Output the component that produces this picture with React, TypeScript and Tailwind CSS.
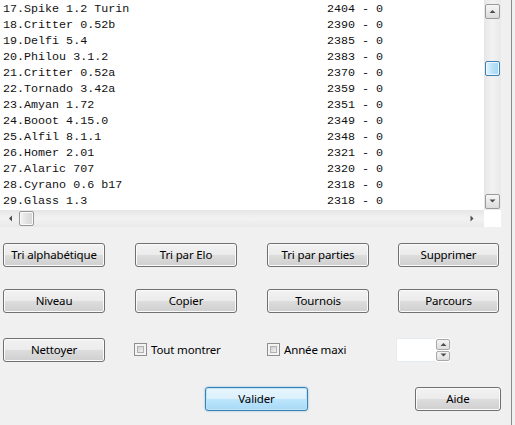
import React from "react";

const rows: [string, string][] = [
  ["17.Spike 1.2 Turin", "2404"],
  ["18.Critter 0.52b", "2390"],
  ["19.Delfi 5.4", "2385"],
  ["20.Philou 3.1.2", "2383"],
  ["21.Critter 0.52a", "2370"],
  ["22.Tornado 3.42a", "2359"],
  ["23.Amyan 1.72", "2351"],
  ["24.Booot 4.15.0", "2349"],
  ["25.Alfil 8.1.1", "2348"],
  ["26.Homer 2.01", "2321"],
  ["27.Alaric 707", "2320"],
  ["28.Cyrano 0.6 b17", "2318"],
  ["29.Glass 1.3", "2318"],
];

const ui = "font-['Noto_Sans','Liberation_Sans',sans-serif] text-[11.5px] tracking-[-0.15px]";

function Arrow({ dir }: { dir: "up" | "down" | "left" | "right" }) {
  const pts: Record<string, string> = {
    up: "0.5,4 3.5,1 6.5,4",
    down: "0.5,0.5 3.5,3.5 6.5,0.5",
    left: "4,0.5 1,3.5 4,6.5",
    right: "0.5,0.5 3.5,3.5 0.5,6.5",
  };
  const horiz = dir === "left" || dir === "right";
  return (
    <svg width={horiz ? 5 : 7} height={horiz ? 7 : 5} viewBox={horiz ? "0 0 5 7" : "0 0 7 5"}>
      <polygon points={pts[dir]} fill="#4d4d4d" />
    </svg>
  );
}

function Btn({ label, w = "w-[102px]" }: { label: string; w?: string }) {
  return (
    <button
      className={`${w} h-[24px] rounded-[3px] border border-[#707070] bg-[linear-gradient(#f2f2f2_0%,#ebebeb_50%,#dddddd_50%,#cfcfcf_100%)] shadow-[inset_0_0_0_1px_#fbfbfb] text-black flex items-center justify-center ${ui}`}
    >
      {label}
    </button>
  );
}

function Check({ label }: { label: string }) {
  return (
    <div className={`flex items-center gap-[4px] text-black ${ui}`}>
      <div className="w-[13px] h-[13px] border border-[#8e8f8f] bg-[#f4f4f4] p-[2px]">
        <div className="w-full h-full border border-[#b0b0b0] bg-[linear-gradient(135deg,#cfcfcf,#f2f2f2)]" />
      </div>
      <span>{label}</span>
    </div>
  );
}

export default function App() {
  return (
    <div className="w-[515px] h-[425px] bg-[#f0f0f0] flex overflow-hidden">
      <div className="w-[511px] flex flex-col">
        {/* list */}
        <div className="w-[501px] h-[227px] flex flex-col bg-white">
          <div className="h-[210px] flex">
            <div className="w-[484px] h-[210px] pl-[3px] pt-[1px] font-['Liberation_Mono',monospace] text-[11.7px] leading-[16px] text-[#111]">
              {rows.map(([n, s]) => (
                <div key={n} className="flex whitespace-pre">
                  <span className="w-[324px]">{n}</span>
                  <span>{s} - 0</span>
                </div>
              ))}
            </div>
            {/* vertical scrollbar */}
            <div className="w-[17px] h-[210px] bg-[linear-gradient(90deg,#e6e6e6,#f2f2f2_50%,#e9e9e9)] flex flex-col items-center pt-[4px]">
              <div className="w-[15px] h-[15px] rounded-[2px] border border-[#9a9a9a] bg-[linear-gradient(#f6f6f6,#dcdcdc)] flex items-center justify-center">
                <Arrow dir="up" />
              </div>
              <div className="mt-[42px] w-[15px] h-[15px] rounded-[2px] border border-[#3c7fb1] bg-[linear-gradient(90deg,#e3f4fc,#b9e1f8_50%,#a4d4f3)] shadow-[inset_0_0_0_1px_#eef8fe]" />
              <div className="flex-1" />
              <div className="mb-[1px] w-[15px] h-[15px] rounded-[2px] border border-[#9a9a9a] bg-[linear-gradient(#f6f6f6,#dcdcdc)] flex items-center justify-center">
                <Arrow dir="down" />
              </div>
            </div>
          </div>
          <div className="h-[17px] flex">
            {/* horizontal scrollbar */}
            <div className="w-[484px] h-[17px] bg-[linear-gradient(#e6e6e6,#f2f2f2_50%,#e9e9e9)] flex items-center">
              <div className="w-[18px] flex justify-center pl-[2px]">
                <Arrow dir="left" />
              </div>
              <div className="ml-[1px] w-[15px] h-[15px] rounded-[2px] border border-[#969696] bg-[linear-gradient(90deg,#f3f3f3,#e2e2e2_50%,#d6d6d6)] shadow-[inset_0_0_0_1px_#fafafa]" />
              <div className="flex-1" />
              <div className="w-[18px] flex justify-center pr-[6px]">
                <Arrow dir="right" />
              </div>
            </div>
            <div className="w-[17px] h-[17px] bg-white" />
          </div>
        </div>

        {/* controls */}
        <div className="pl-[3px] pt-[16px] flex flex-col">
          <div className="grid grid-cols-[132px_132px_131px_auto] h-[24px]">
            <Btn label="Tri alphabétique" />
            <Btn label="Tri par Elo" />
            <Btn label="Tri par parties" />
            <Btn label="Supprimer" w="w-[101px]" />
          </div>
          <div className="grid grid-cols-[132px_132px_131px_auto] h-[24px] mt-[22px]">
            <Btn label="Niveau" />
            <Btn label="Copier" />
            <Btn label="Tournois" />
            <Btn label="Parcours" w="w-[101px]" />
          </div>
          <div className="grid grid-cols-[132px_132px_131px_auto] h-[24px] mt-[24px] items-center">
            <Btn label="Nettoyer" />
            <div className="-ml-[1px]">
              <Check label="Tout montrer" />
            </div>
            <Check label="Année maxi" />
            <div className="-ml-[2px] flex h-[24px] mt-[1px]">
              <div className="w-[40px] h-[24px] bg-white border border-[#e6ebf0] border-r-0" />
              <div className="w-[14px] h-[24px] flex flex-col bg-white gap-[1px] py-px">
                <div className="flex-1 rounded-[2px] border border-[#a9a9a9] bg-[linear-gradient(#f4f4f4,#dedede)] flex items-center justify-center">
                  <Arrow dir="up" />
                </div>
                <div className="flex-1 rounded-[2px] border border-[#a9a9a9] bg-[linear-gradient(#f4f4f4,#dedede)] flex items-center justify-center">
                  <Arrow dir="down" />
                </div>
              </div>
            </div>
          </div>
          <div className="flex h-[24px] mt-[26px]">
            <button
              className={`ml-[202px] w-[103px] h-[24px] rounded-[3px] border border-[#3c7fb1] bg-[linear-gradient(#eaf6fd_0%,#d9f0fc_50%,#bee6fd_50%,#a7d9f5_100%)] shadow-[inset_0_0_0_1px_#bfe4f7,0_0_2px_#6fb4dd] text-black flex items-center justify-center ${ui}`}
            >
              Valider
            </button>
            <div className="ml-[107px]">
              <Btn label="Aide" w="w-[86px]" />
            </div>
          </div>
        </div>
      </div>
      <div className="w-px h-full bg-[#8a8a8a]" />
    </div>
  );
}
